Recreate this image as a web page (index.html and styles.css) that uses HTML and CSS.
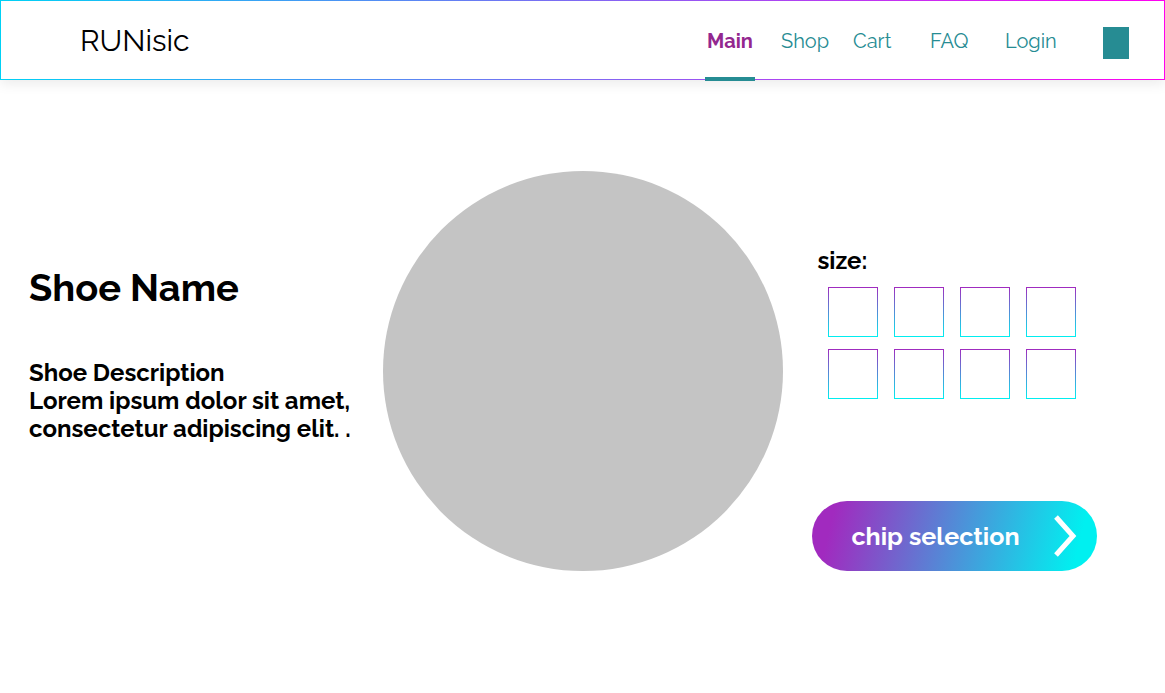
FILE: index.html
```
<!DOCTYPE html>
<html lang="en">
<head>
<meta charset="utf-8">
<meta name="viewport" content="width=device-width, initial-scale=1">
<title>RUNisic</title>
<link rel="stylesheet" href="styles.css">
</head>
<body>
<header class="header">
  <a class="logo" href="#">RUNisic</a>
  <nav class="nav">
    <a class="nav-link nav-link-active" href="#" aria-current="page">Main</a>
    <a class="nav-link" href="#">Shop</a>
    <a class="nav-link" href="#">Cart</a>
    <a class="nav-link" href="#">FAQ</a>
    <a class="nav-link" href="#">Login</a>
    <span class="nav-block"></span>
  </nav>
</header>
<main class="product">
  <section class="details">
    <h1 class="name">Shoe Name</h1>
    <p class="description">Shoe Description<br>Lorem ipsum dolor sit amet,<br>consectetur adipiscing elit. .</p>
  </section>
  <div class="photo"></div>
  <form class="options">
    <fieldset class="sizes">
      <legend class="sizes-title">size:</legend>
      <div class="sizes-grid">
        <input class="size" type="radio" name="size" aria-label="size 1">
        <input class="size" type="radio" name="size" aria-label="size 2">
        <input class="size" type="radio" name="size" aria-label="size 3">
        <input class="size" type="radio" name="size" aria-label="size 4">
        <input class="size" type="radio" name="size" aria-label="size 5">
        <input class="size" type="radio" name="size" aria-label="size 6">
        <input class="size" type="radio" name="size" aria-label="size 7">
        <input class="size" type="radio" name="size" aria-label="size 8">
      </div>
    </fieldset>
    <button class="next" type="button">
      <span>chip selection</span>
      <svg class="chevron" width="24" height="42" viewBox="0 0 24 42" aria-hidden="true"><path d="M2 2 19 21 2 40" fill="none" stroke="#fff" stroke-width="5"/></svg>
    </button>
  </form>
</main>
</body>
</html>
```
FILE: styles.css
```
* {
  box-sizing: border-box;
}

body {
  margin: 0;
  min-height: 100vh;
  background: #fff;
  color: #000;
  font-family: Raleway, Lato, sans-serif;
}

.header {
  display: flex;
  justify-content: space-between;
  height: 80px;
  padding: 0 35px 0 79px;
  border: 1px solid;
  border-image: linear-gradient(90deg, #00d1f5, #ff00f0) 1;
  box-shadow: 0 4px 12px rgba(0, 0, 0, 0.08);
}

.logo {
  align-self: center;
  padding-top: 2px;
  color: #000;
  font-size: 30px;
  font-weight: 400;
  line-height: 40px;
  text-decoration: none;
}

.nav {
  display: grid;
  grid-template-columns: 74px 72px 77px 75px 100px 26px;
}

.nav-link {
  justify-self: start;
  height: 80px;
  padding: 0 2px;
  color: #268c93;
  font-size: 20px;
  line-height: 80px;
  text-decoration: none;
}

.nav-link-active {
  border-bottom: 4px solid #268c93;
  color: #93278f;
  font-weight: 700;
}

.nav-block {
  align-self: center;
  height: 32px;
  margin-top: 4px;
  background: #268c93;
}

.product {
  display: grid;
  grid-template-columns: 1fr 400px 1fr;
  padding-top: 91px;
}

.details {
  padding: 92px 0 0 29px;
}

.name {
  margin: 0;
  font-size: 38px;
  font-weight: 700;
  line-height: 50px;
}

.description {
  margin: 46px 0 0;
  font-size: 24px;
  font-weight: 700;
  line-height: 28px;
  white-space: nowrap;
}

.photo {
  aspect-ratio: 1;
  border-radius: 50%;
  background: #c4c4c4;
}

.options {
  padding: 76px 0 0 29px;
}

.sizes {
  margin: 0;
  padding: 0 0 0 16px;
  border: 0;
}

.sizes-title {
  margin-left: -10px;
  padding: 0;
  font-size: 24px;
  font-weight: 700;
  line-height: 28px;
}

.sizes-grid {
  display: grid;
  grid-template-columns: repeat(4, 50px);
  gap: 12px 16px;
  margin-top: 12px;
}

.size {
  appearance: none;
  width: 50px;
  height: 50px;
  margin: 0;
  border: 1px solid;
  border-image: linear-gradient(#a12abf, #00eff0) 1;
}

.size:checked {
  background: #e0fbfc;
}

.next {
  display: flex;
  align-items: center;
  justify-content: space-between;
  width: 285px;
  height: 70px;
  margin-top: 102px;
  padding: 0 19px 0 40px;
  border: 0;
  border-radius: 35px;
  background: linear-gradient(104deg, #a12abf 8%, #00f0f0 92%);
  color: #fff;
  font: inherit;
  font-size: 25px;
  font-weight: 700;
}
```
